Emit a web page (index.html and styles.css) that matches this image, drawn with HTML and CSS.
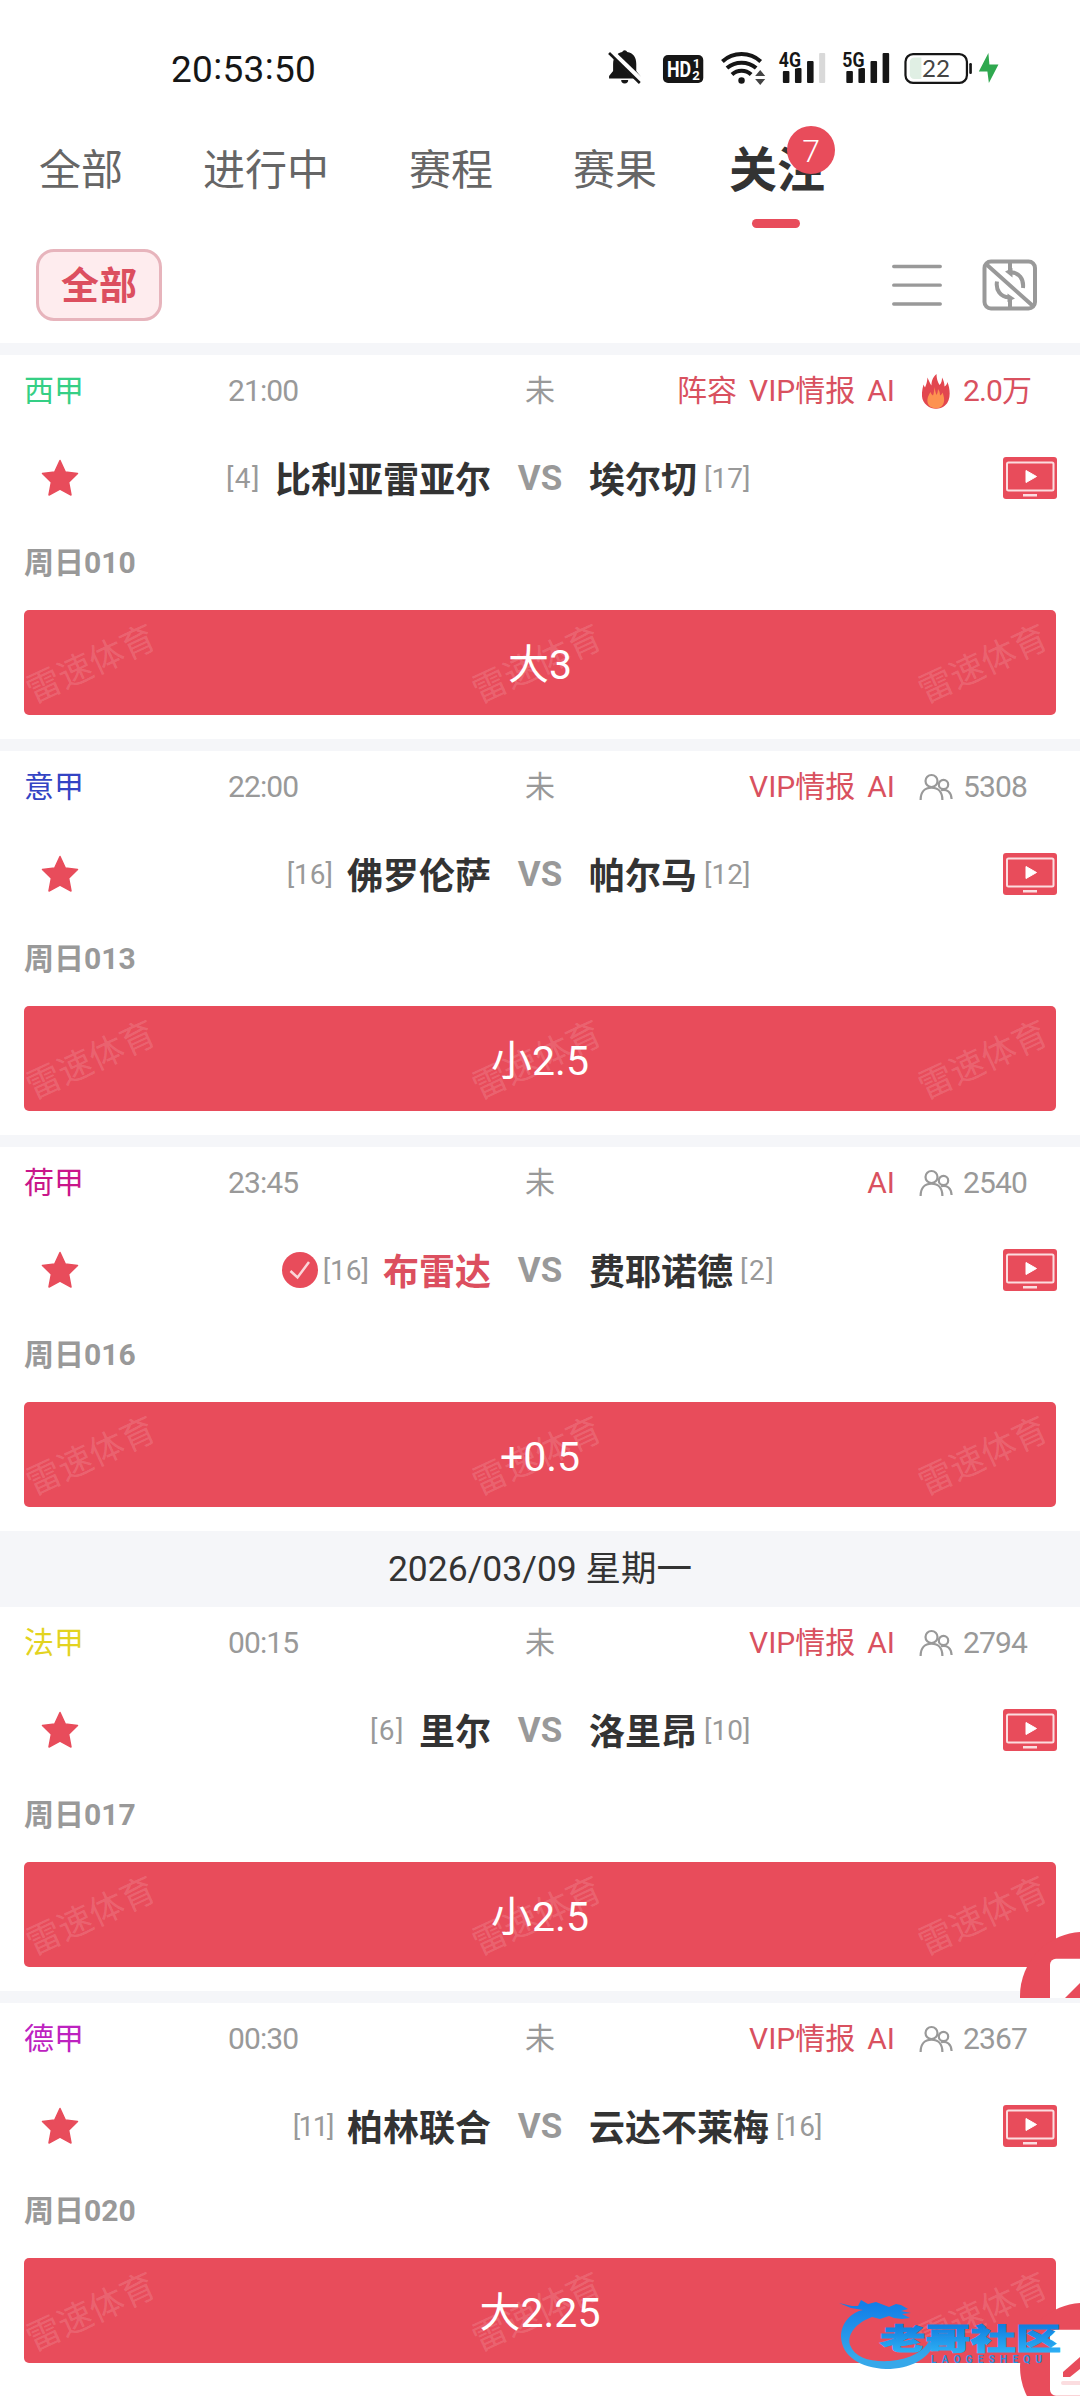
FILE: index.html
```html
<!DOCTYPE html>
<html lang="zh-CN">
<head>
<meta charset="utf-8">
<title>关注</title>
<link rel="stylesheet" href="styles.css">
</head>
<body>
<svg class="defs" width="0" height="0" aria-hidden="true">
  <symbol id="star" viewBox="0 0 38 38"><path d="M19 1.5 24.3 13 36.5 14.4 27.6 23.2 30 36 19 30.2 8 36 10.4 23.2 1.5 14.4 13.7 13Z" fill="#e84c5b" stroke="#e84c5b" stroke-width="1.5" stroke-linejoin="round"/></symbol>
  <symbol id="tv" viewBox="0 0 54 42"><rect width="54" height="42" rx="3" fill="#e84c5b"/><rect x="4" y="5.5" width="46.500" height="28" rx="1.500" fill="none" stroke="#fbdde0" stroke-width="2"/><path d="M23 13.500 33.500 19.500 23 25.500Z" fill="#fff" stroke="#fff" stroke-linejoin="round"/><rect x="20" y="37" width="14" height="2.500" fill="#fbdde0"/></symbol>
  <symbol id="people" viewBox="0 0 34 28"><g fill="none" stroke="#999" stroke-width="2.200"><circle cx="12.500" cy="8" r="6"/><path d="M1.600 27C1.600 19 6 14.600 12.500 14.600S23.400 19 23.400 27"/><circle cx="24.500" cy="11.500" r="4.700"/><path d="M22 17.200C28 15.500 32.400 19.500 32.600 26"/></g></symbol>
  <symbol id="fire" viewBox="0 0 28 35"><path d="M14.500 0C10 4 9.500 8 9.500 11.500 8 9.500 7 7 5.500 3.500 5 8 4.500 10 3 13.500 2.300 12.500 1.800 11.500 1.500 10.500-1 20-1 27 5 31.500 10 35.800 18 35.800 23 31.500 29 26.500 28.500 16 25.500 8 25 10 24 11.500 22.500 12.500 22.500 9 21.500 6 20 3.500 20 7 19.500 9 17.500 11 15.500 8 14.500 4 14.500 0Z" fill="#e2474f"/><path d="M12.500 13C12 17 12 19 11 21.500 9.500 20.500 9 19.500 8.500 18 5 23 4 29 8 32.500 11.500 35 17 35 20 32 23.500 28 22 22.500 20.500 18.500 20 20 19 21 18 21.500 18 18 17 16.500 16 15 15.800 18 15.500 19.500 14.500 21 13.500 18.500 13 16 12.500 13Z" fill="#fd9250"/></symbol>
</svg>

<header class="status">
  <time class="clock">20<i>:</i>53<i>:</i>50</time>
  <svg class="status-icons" width="403" height="44" viewBox="0 0 400 44" preserveAspectRatio="none">
    <g fill="#161616">
      <path d="M9 28 13 23V16C13 9 17 5 22 4a2.700 2.700 0 0 1 5 0C33 5 36 9 36 16V23L40 28V30.500H9Z"/>
      <path d="M21 32h7a3.500 3.500 0 0 1-7 0Z"/>
      <path d="M10 3 42 34" stroke="#fff" stroke-width="6"/>
      <path d="M9 5 39.500 35" stroke="#161616" stroke-width="2.600"/>
      <rect x="62.500" y="7" width="40" height="28" rx="5"/>
      <circle cx="140.500" cy="32.500" r="3.200"/>
      <path d="m154 28 5-6 5 6Zm0 3 5 6 5-6Z" fill="#444"/>
      <g><rect x="181.500" y="23" width="6.500" height="12" rx="1"/><rect x="193.500" y="20" width="6.500" height="15" rx="1"/><rect x="205.500" y="13" width="6.500" height="22" rx="1"/><rect x="217.500" y="5" width="6" height="30" rx="1" fill="#d9d9d9"/></g>
      <g><rect x="244.500" y="23" width="6.500" height="12" rx="1"/><rect x="256.500" y="20" width="6.500" height="15" rx="1"/><rect x="268.500" y="13" width="6.500" height="22" rx="1"/><rect x="280.500" y="5" width="6.500" height="30" rx="1"/></g>
    </g>
    <g fill="none" stroke="#161616" stroke-width="4"><path d="M131 26.500a14 14 0 0 1 19 0M126 20a22.500 22.500 0 0 1 29 0M121.500 13.500a28 28 0 0 1 38 0"/></g>
    <g class="glyph"><text x="66.500" y="29.500" font-size="22" textLength="24" lengthAdjust="spacingAndGlyphs" fill="#fff">HD</text><text x="92" y="20" font-size="13" fill="#fff">1</text><text x="91.500" y="32" font-size="13" fill="#fff">2</text>
    <text x="177.500" y="19" font-size="21" textLength="22" lengthAdjust="spacingAndGlyphs" stroke="#fff" stroke-width="3" paint-order="stroke">4G</text><text x="240.500" y="19" font-size="21" textLength="22" lengthAdjust="spacingAndGlyphs" stroke="#fff" stroke-width="3" paint-order="stroke">5G</text></g>
    <rect x="303.200" y="6.200" width="61" height="28.600" rx="7.500" fill="#fff" stroke="#161616" stroke-width="2.200"/>
    <path d="M319 9.500V31H312a4.500 4.500 0 0 1-4.500-4.500V14A4.500 4.500 0 0 1 312 9.500Z" fill="#e0efe4"/>
    <rect x="366.500" y="15" width="2.600" height="11" rx="1.200" fill="#161616"/>
    <text class="charge" x="333.500" y="29" text-anchor="middle">22</text>
    <path d="M385.500 5 376 23.500H384.500L386 35 395.500 16.500H386.500Z" fill="#2fa84f"/>
  </svg>
</header>

<nav class="tabs">
  <a class="tab">全部</a><a class="tab">进行中</a><a class="tab">赛程</a><a class="tab">赛果</a>
  <a class="tab active">关注<b class="badge">7</b></a>
</nav>

<div class="filter">
  <button class="chip">全部</button>
  <svg width="50" height="44" viewBox="0 0 50 44" stroke="#999" stroke-width="3.300" stroke-linecap="round"><path d="M1.700 3.500H48.300M1.700 22.200H48.300M1.700 41H48.300"/></svg>
  <svg class="swap" width="56" height="52" viewBox="0 0 56 52" fill="none" stroke="#999" stroke-width="4"><rect x="2.500" y="2.500" width="50.500" height="47" rx="6.500"/><path d="M4 5 51 47M28 3V14M28 49V38"/><path d="M28.500 13.300C37 13.500 42 20 41 29M27 38.200C18.500 38 13.500 31 15 22.500"/><path d="M23 12.500 30.500 9V18.500ZM33 39.500 25.500 34.500V43Z" fill="#999" stroke="none"/></svg>
</div>

<main>
  <article class="match">
    <div class="info"><span class="league green">西甲</span><time>21:00</time><span class="state">未</span><span class="tags"><i>阵容</i><i>VIP情报</i><i>AI</i></span><svg class="fire" width="28" height="35"><use href="#fire"/></svg><span class="count hot">2.0万</span></div>
    <div class="teams"><svg class="star" width="38" height="38"><use href="#star"/></svg><span class="home"><small class="single">[4]</small><b>比利亚雷亚尔</b></span><em>VS</em><span class="away"><b>埃尔切</b><small>[17]</small></span><svg class="tv" width="54" height="42"><use href="#tv"/></svg></div>
    <div class="number">周日010</div>
    <div class="pick"><div class="marks"><span>雷速体育</span><span>雷速体育</span><span>雷速体育</span></div><strong>大3</strong></div>
  </article>
  <article class="match">
    <div class="info"><span class="league blue">意甲</span><time>22:00</time><span class="state">未</span><span class="tags"><i>VIP情报</i><i>AI</i></span><svg class="people" width="34" height="28"><use href="#people"/></svg><span class="count">5308</span></div>
    <div class="teams"><svg class="star" width="38" height="38"><use href="#star"/></svg><span class="home"><small>[16]</small><b>佛罗伦萨</b></span><em>VS</em><span class="away"><b>帕尔马</b><small>[12]</small></span><svg class="tv" width="54" height="42"><use href="#tv"/></svg></div>
    <div class="number">周日013</div>
    <div class="pick"><div class="marks"><span>雷速体育</span><span>雷速体育</span><span>雷速体育</span></div><strong>小2.5</strong></div>
  </article>
  <article class="match">
    <div class="info"><span class="league magenta">荷甲</span><time>23:45</time><span class="state">未</span><span class="tags"><i>AI</i></span><svg class="people" width="34" height="28"><use href="#people"/></svg><span class="count">2540</span></div>
    <div class="teams"><svg class="star" width="38" height="38"><use href="#star"/></svg><span class="home chosen"><svg class="check" width="36" height="36" viewBox="0 0 36 36"><circle cx="18" cy="18" r="18" fill="#e84c5b"/><path d="M8.500 19 15.500 25.500 27 10" fill="none" stroke="#fbd5d9" stroke-width="2.500"/></svg><small>[16]</small><b>布雷达</b></span><em>VS</em><span class="away"><b>费耶诺德</b><small class="single">[2]</small></span><svg class="tv" width="54" height="42"><use href="#tv"/></svg></div>
    <div class="number">周日016</div>
    <div class="pick"><div class="marks"><span>雷速体育</span><span>雷速体育</span><span>雷速体育</span></div><strong>+0.5</strong></div>
  </article>
  <h2 class="date">2026/03/09 星期一</h2>
  <article class="match">
    <div class="info"><span class="league yellow">法甲</span><time>00:15</time><span class="state">未</span><span class="tags"><i>VIP情报</i><i>AI</i></span><svg class="people" width="34" height="28"><use href="#people"/></svg><span class="count">2794</span></div>
    <div class="teams"><svg class="star" width="38" height="38"><use href="#star"/></svg><span class="home"><small class="single">[6]</small><b>里尔</b></span><em>VS</em><span class="away"><b>洛里昂</b><small>[10]</small></span><svg class="tv" width="54" height="42"><use href="#tv"/></svg></div>
    <div class="number">周日017</div>
    <div class="pick"><div class="marks"><span>雷速体育</span><span>雷速体育</span><span>雷速体育</span></div><strong>小2.5</strong></div>
    <svg class="float upper" width="60" height="66" viewBox="0 0 60 66"><circle cx="64" cy="64" r="64" fill="#e84c5b"/><rect x="30" y="26.700" width="80" height="66" rx="6" fill="#fff"/><path d="M45 66 60 51V66Z" fill="#e84c5b"/></svg>
  </article>
  <article class="match">
    <div class="info"><span class="league purple">德甲</span><time>00:30</time><span class="state">未</span><span class="tags"><i>VIP情报</i><i>AI</i></span><svg class="people" width="34" height="28"><use href="#people"/></svg><span class="count">2367</span></div>
    <div class="teams"><svg class="star" width="38" height="38"><use href="#star"/></svg><span class="home"><small class="narrow">[11]</small><b>柏林联合</b></span><em>VS</em><span class="away"><b>云达不莱梅</b><small>[16]</small></span><svg class="tv" width="54" height="42"><use href="#tv"/></svg></div>
    <div class="number">周日020</div>
    <div class="pick"><div class="marks"><span>雷速体育</span><span>雷速体育</span><span>雷速体育</span></div><strong>大2.25</strong></div>
    <svg class="float lower" width="60" height="93" viewBox="0 0 60 93"><circle cx="64" cy="64" r="64" fill="#e84c5b"/><rect x="30" y="26.700" width="80" height="66" rx="6" fill="#fff"/><path d="M43 74V69L60 54V66L50 74Z" fill="#e84c5b"/><rect x="41" y="78" width="30" height="4" rx="2" fill="#fbdde0"/></svg>
    <svg class="community" width="226" height="74" viewBox="0 0 226 74">
      <defs>
        <linearGradient id="sea" gradientUnits="userSpaceOnUse" x1="0" y1="8" x2="0" y2="60"><stop offset="0" stop-color="#127fe8"/><stop offset="1" stop-color="#36a8ea"/></linearGradient>
        <linearGradient id="wave" gradientUnits="userSpaceOnUse" x1="0" y1="44" x2="0" y2="88"><stop offset="0" stop-color="#127fe0"/><stop offset="1" stop-color="#2fb4f6"/></linearGradient>
      </defs>
      <path d="M3 6 16 9 22 9 25 3 32 7 40 5 53 10 60 7 65 8 72 12 65 14 75 16 66 17 74 21 66 22 58 21 53 19 44 22 36 20C20 26 11 37 14 48 19 61 34 65 54 64 75 62 88 54 93 44L98 48C91 62 75 72 50 72 24 71 6 59 5 40 5 25 16 15 27 13L15 11Z" fill="url(#sea)"/>
      <g transform="scale(1 .66)"><text class="community-name" x="44" y="81" textLength="181" lengthAdjust="spacingAndGlyphs" fill="url(#wave)">老哥社区</text></g>
      <text class="community-latin" x="95" y="66" textLength="111">LAOGESHEQU</text>
    </svg>
  </article>
</main>
</body>
</html>
```

FILE: styles.css
```css
* { box-sizing: border-box; }
body {
  margin: 0;
  width: 1080px;
  height: 2396px;
  overflow: hidden;
  background: #fff;
  color: #999;
  font-family: Roboto, "Noto Sans CJK SC", sans-serif;
}
i, em { font-style: normal; }
svg { display: block; flex: none; }
.defs { position: absolute; }

.status {
  display: flex;
  justify-content: space-between;
  align-items: flex-start;
  height: 126px;
  padding: 48px 77px 0 171px;
}
.clock { font-size: 37px; line-height: 43px; letter-spacing: .3px; color: #161616; }
.clock i { position: relative; top: -3px; }
.glyph { font-weight: 700; fill: #161616; }
.charge { font-family: Lato, sans-serif; font-size: 24px; fill: #444; }

.tabs {
  display: flex;
  gap: 80px;
  height: 106px;
  padding-left: 39px;
}
.tab { position: relative; font-size: 42px; line-height: 89px; color: #666; }
.tab.active { margin-left: -8px; font-size: 48px; font-weight: 700; color: #333; }
.tab.active::after {
  content: "";
  position: absolute;
  left: 23px;
  top: 93px;
  width: 48px;
  height: 9px;
  border-radius: 5px;
  background: #e84c5b;
}
.badge {
  position: absolute;
  left: 58px;
  top: 0;
  width: 48px;
  height: 48px;
  border-radius: 50%;
  background: #e84c5b;
  color: #fff;
  font-size: 32px;
  font-weight: 300;
  line-height: 50px;
  text-align: center;
}

.filter {
  display: flex;
  align-items: center;
  height: 111px;
  padding: 0 42px 6px 36px;
}
.chip {
  width: 126px;
  height: 72px;
  margin-right: auto;
  padding: 2px 0 0;
  border: 3px solid #e7b4bc;
  border-radius: 18px;
  background: #feecee;
  color: #dc4f5f;
  font: 700 38px/64px Roboto, "Noto Sans CJK SC", sans-serif;
}
.swap { margin-left: 40px; }

.match {
  position: relative;
  display: flex;
  flex-direction: column;
  height: 396px;
  padding: 0 24px;
  border-top: 12px solid #f5f6f9;
}
.info {
  display: grid;
  grid-template-columns: 204px 286px 52px 327px 26px 44px auto;
  align-items: center;
  height: 72px;
  font-size: 30px;
  line-height: 44px;
}
.info time, .count { letter-spacing: -.9px; }
.info svg { grid-column: 6; }
.state { text-align: center; }
.tags { display: flex; justify-content: flex-end; gap: 12px; margin-right: -2px; color: #d9515f; }
.hot { color: #d9515f; }
.fire { margin-left: 3px; }
.green { color: #35cf85; }
.blue { color: #3344c4; }
.magenta { color: #c9168a; }
.yellow { color: #e3d31f; }
.purple { color: #bd22c0; }

.teams {
  display: grid;
  grid-template-columns: 54px 413px 98px 1fr 54px;
  align-items: center;
  height: 102px;
  margin-right: -1px;
}
.star { margin-left: 17px; }
.home, .away { display: flex; align-items: center; }
.home { justify-content: flex-end; gap: 14px; }
.away { gap: 7px; }
.teams b { padding-top: 5px; font-size: 36px; font-weight: 700; line-height: 52px; color: #333; }
.teams small { padding-top: 2px; font-size: 28px; line-height: 40px; }
.teams .single { letter-spacing: 1.5px; }
.teams .narrow { letter-spacing: -1.5px; }
.teams em { font-size: 35px; font-weight: 700; text-align: center; }
.teams .chosen b { color: #dc4f5f; }
.check { margin-right: -9px; }

.number { height: 67px; margin-bottom: 14px; font-size: 30px; font-weight: 700; line-height: 67px; }

.pick {
  position: relative;
  height: 105px;
  border-radius: 5px;
  background: #e84c5b;
  color: #fff;
  text-align: center;
  overflow: hidden;
}
.pick strong { position: relative; font-size: 41px; font-weight: 400; line-height: 110px; }
.marks {
  position: absolute;
  inset: 2px 2px 0 -4px;
  display: flex;
  justify-content: space-between;
  align-items: center;
}
.marks span {
  width: 142px;
  font-size: 34.5px;
  line-height: 48px;
  white-space: nowrap;
  color: rgba(255, 255, 255, .15);
  transform: rotate(-24.8deg);
}

.date {
  height: 76px;
  margin: 0 0 -12px;
  background: #f5f6f9;
  color: #333;
  font-size: 35.5px;
  font-weight: 400;
  line-height: 77px;
  text-align: center;
}

.float { position: absolute; right: 0; z-index: 1; }
.upper { top: 325px; }
.lower { top: 300px; }
.community { position: absolute; left: 836px; top: 294px; z-index: 2; }
.community-name { font-size: 44px; font-weight: 900; stroke: url(#wave); stroke-width: 1.5px; }
.community-latin { font-size: 10px; font-weight: 700; fill: #2a8fe0; }
```
